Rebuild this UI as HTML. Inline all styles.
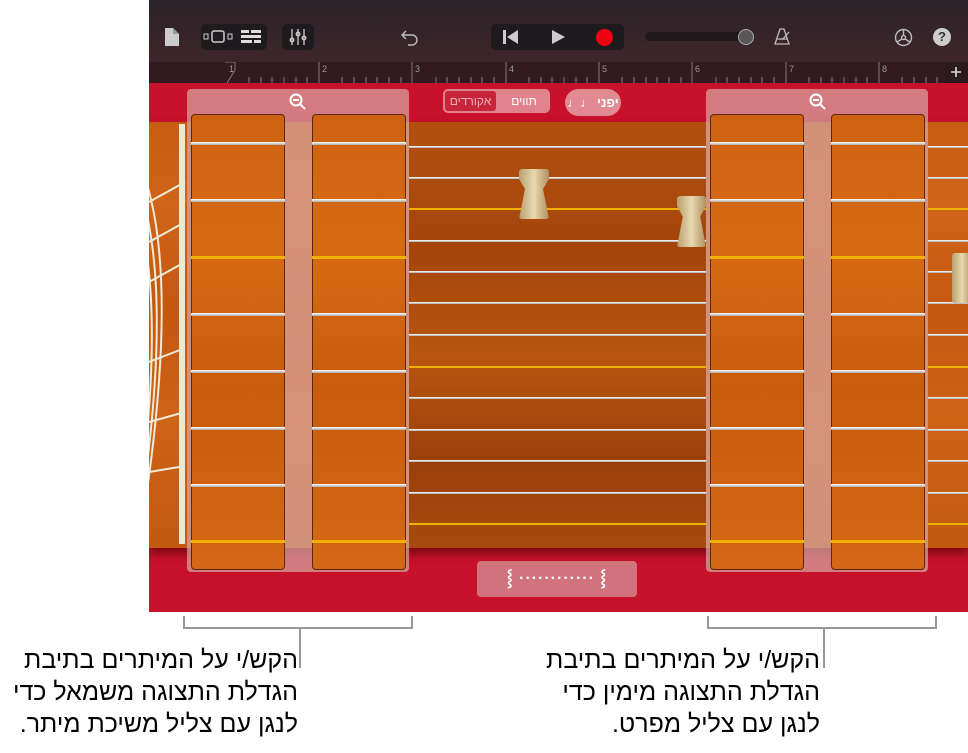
<!DOCTYPE html><html><head><meta charset="utf-8"><style>
*{margin:0;padding:0;box-sizing:border-box}
body{width:968px;height:753px;background:#fff;position:relative;overflow:hidden;font-family:"Liberation Sans","Noto Sans CJK SC",sans-serif}
.a{position:absolute}
#app{left:149px;top:0;width:819px;height:612px;overflow:hidden;background:#c8112a}
.tb{left:0;top:0;width:819px;height:62px;background:linear-gradient(#2a2428,#3e252a)}
.ruler{left:0;top:62px;width:819px;height:21px;background:#321a1f}
.wood{left:0;top:122px;width:819px;height:426px;background:linear-gradient(180deg,#c85c12,#d06418 20%,#c45810 45%,#cf6316 70%,#c25a12);box-shadow:0 6px 8px rgba(60,0,0,.5)}
.mid{background:linear-gradient(180deg,#b4500e,#a5450c 30%,#b85510 55%,#9a400a 80%,#a84a0d)}
.panel{background:rgba(215,165,160,.72);border-radius:4px}
.col{background:linear-gradient(180deg,#cf6210,#d66a14 30%,#c95c0c 60%,#d46814);border:1px solid #5a2a10;border-radius:4px}
.s{height:3px;background:linear-gradient(#fff,#aaa);left:0;right:0}
.g{height:3px;background:#f0b000;left:0;right:0}
.btn{background:#1f1a1d;border-radius:5px}
.cal{font-size:25px;direction:rtl;text-align:right;line-height:32px;color:#000;white-space:nowrap}
</style></head><body>
<div id="app" class="a">
<div class="a tb"></div>
<svg class="a" style="left:16px;top:28px" width="14" height="18"><path d="M0 0h8l6 6v12H0z" fill="#ccc"/><path d="M8 0v6h6" fill="#999"/></svg>
<div class="a btn" style="left:52px;top:24px;width:66px;height:26px"></div>
<svg class="a" style="left:54px;top:30px" width="30" height="14"><rect x="1" y="4" width="4" height="5" fill="none" stroke="#ccc"/><rect x="9" y="1" width="12" height="11" rx="2" fill="none" stroke="#ccc" stroke-width="1.5"/><rect x="25" y="4" width="4" height="5" fill="none" stroke="#ccc"/></svg>
<svg class="a" style="left:92px;top:30px" width="20" height="14"><rect x="0" y="0" width="8" height="3" fill="#ddd"/><rect x="10" y="0" width="10" height="3" fill="#ddd"/><rect x="0" y="5" width="20" height="3" fill="#ddd"/><rect x="0" y="10" width="11" height="3" fill="#ddd"/><rect x="13" y="10" width="7" height="3" fill="#ddd"/></svg>
<div class="a btn" style="left:133px;top:24px;width:32px;height:26px"></div>
<svg class="a" style="left:140px;top:29px" width="18" height="16" stroke="#ccc" stroke-width="1.3" fill="none"><path d="M3 0v16M9 0v16M15 0v16"/><circle cx="3" cy="11" r="1.8"/><circle cx="9" cy="5" r="1.8"/><circle cx="15" cy="9" r="1.8"/></svg>
<svg class="a" style="left:252px;top:30px" width="18" height="16" fill="none" stroke="#bbb" stroke-width="1.4"><path d="M5 1L1 5l4 4M1 5h10a5 5 0 010 10H7"/></svg>
<div class="a btn" style="left:342px;top:24px;width:133px;height:26px"></div>
<svg class="a" style="left:354px;top:30px" width="16" height="14"><rect x="0" y="0" width="3" height="14" fill="#ccc"/><path d="M15 0v14L4 7z" fill="#ccc"/></svg>
<svg class="a" style="left:403px;top:30px" width="14" height="14"><path d="M0 0l13 7L0 14z" fill="#ccc"/></svg>
<div class="a" style="left:447px;top:29px;width:17px;height:17px;border-radius:50%;background:#f00011"></div>
<div class="a" style="left:496px;top:32px;width:100px;height:9px;border-radius:5px;background:#201a1d"></div>
<div class="a" style="left:589px;top:29px;width:16px;height:16px;border-radius:50%;background:#5a5557;border:1.5px solid #aaa"></div>
<svg class="a" style="left:624px;top:28px" width="18" height="18" fill="none" stroke="#bbb" stroke-width="1.3"><path d="M2 16h14L11 1H7zM4 11h10M9 12L16 4"/></svg>
<svg class="a" style="left:745px;top:28px" width="19" height="19" fill="none" stroke="#bbb" stroke-width="1.4"><circle cx="9.5" cy="9.5" r="8"/><circle cx="9.5" cy="9.5" r="2"/><path d="M9.5 7.5V2M8 11l-5 3M11 11l5 3"/></svg>
<div class="a" style="left:784px;top:28px;width:18px;height:18px;border-radius:50%;background:#ccc;color:#333;font-size:13px;font-weight:bold;text-align:center;line-height:18px">?</div>
<div class="a ruler"></div>
<svg class="a" style="left:0;top:62px" width="819" height="21">
<g fill="none" stroke="#8a7477" stroke-width="1">
<path d="M76 0h10v8L78 21"/>
<path d="M170 0v21M263 0v21M357 0v21M450 0v21M543 0v21M637 0v21M730 0v21"/>
<path d="M100 15v6M112 15v6M123 15v6M135 15v6M147 15v6M158 15v6M193 15v6M205 15v6M217 15v6M228 15v6M240 15v6M252 15v6M287 15v6M298 15v6M310 15v6M322 15v6M333 15v6M345 15v6M380 15v6M392 15v6M403 15v6M415 15v6M427 15v6M438 15v6M473 15v6M485 15v6M497 15v6M508 15v6M520 15v6M532 15v6M567 15v6M578 15v6M590 15v6M602 15v6M613 15v6M625 15v6M660 15v6M672 15v6M683 15v6M695 15v6M707 15v6M718 15v6M753 15v6M765 15v6M777 15v6M788 15v6"/></g>
<g fill="#999" font-size="9" font-family="Liberation Sans"><text x="80" y="10">1</text><text x="173" y="10">2</text><text x="266" y="10">3</text><text x="360" y="10">4</text><text x="453" y="10">5</text><text x="546" y="10">6</text><text x="640" y="10">7</text><text x="733" y="10">8</text></g>
<rect x="796" y="0" width="23" height="21" fill="#2a1a1d"/><path d="M802 10h10M807 5v10" stroke="#ddd" stroke-width="1.6"/></svg>
<div class="a wood"></div>
<div class="a wood mid" style="left:260px;width:297px;box-shadow:none"></div>
<div class="a" style="left:260px;top:0;width:297px;height:612px">
<div class="a s" style="top:146px;height:2px"></div><div class="a s" style="top:177px;height:2px"></div><div class="a g" style="top:208px;height:2px"></div><div class="a s" style="top:240px;height:2px"></div><div class="a s" style="top:271px;height:2px"></div><div class="a s" style="top:302px;height:2px"></div><div class="a s" style="top:334px;height:2px"></div><div class="a g" style="top:366px;height:2px"></div><div class="a s" style="top:397px;height:2px"></div><div class="a s" style="top:429px;height:2px"></div><div class="a s" style="top:460px;height:2px"></div><div class="a s" style="top:492px;height:2px"></div><div class="a g" style="top:523px;height:2px"></div>
</div>
<div class="a" style="left:779px;top:0;width:40px;height:612px">
<div class="a s" style="top:146px;height:2px"></div><div class="a s" style="top:177px;height:2px"></div><div class="a g" style="top:208px;height:2px"></div><div class="a s" style="top:240px;height:2px"></div><div class="a s" style="top:271px;height:2px"></div><div class="a s" style="top:302px;height:2px"></div><div class="a s" style="top:334px;height:2px"></div><div class="a g" style="top:366px;height:2px"></div><div class="a s" style="top:397px;height:2px"></div><div class="a s" style="top:429px;height:2px"></div><div class="a s" style="top:460px;height:2px"></div><div class="a s" style="top:492px;height:2px"></div><div class="a g" style="top:523px;height:2px"></div>
</div>
<div class="a" style="left:370px;top:169px;width:30px;height:50px;background:linear-gradient(90deg,#b8a070,#e8d8b0,#b09060);border-radius:3px;clip-path:polygon(0 0,100% 0,100% 20%,80% 40%,100% 100%,0 100%,20% 40%,0 20%)"></div>
<div class="a" style="left:528px;top:196px;width:29px;height:51px;background:linear-gradient(90deg,#b8a070,#e8d8b0,#b09060);border-radius:3px;clip-path:polygon(0 0,100% 0,100% 20%,80% 40%,100% 100%,0 100%,20% 40%,0 20%)"></div>
<div class="a" style="left:803px;top:253px;width:20px;height:50px;background:linear-gradient(90deg,#b8a070,#e8d8b0,#b09060);border-radius:3px"></div>
<svg class="a" style="left:0;top:122px" width="40" height="426" fill="none" stroke="#f0ead8" stroke-width="2"><path d="M-20 20Q40 120 -10 420M-20 40Q30 140 -10 400M-20 60Q20 160 -10 380"/><path d="M0 80l36-20M0 120l36-20M0 160l36-20M0 240l36-14M0 300l36-10M0 350l36-6"/><rect x="30" y="2" width="6" height="420" fill="#efe8d0" stroke="none"/></svg>
<div class="a panel" style="left:38px;top:89px;width:222px;height:483px"></div>
<div class="a panel" style="left:557px;top:89px;width:222px;height:483px"></div>
<svg class="a" style="left:140px;top:93px" width="18" height="18" fill="none" stroke="#fff" stroke-width="2"><circle cx="7" cy="7" r="5.5"/><path d="M4 7h6M11 11l5 5"/></svg>
<svg class="a" style="left:660px;top:93px" width="18" height="18" fill="none" stroke="#fff" stroke-width="2"><circle cx="7" cy="7" r="5.5"/><path d="M4 7h6M11 11l5 5"/></svg>
<div class="a col" style="left:42px;top:114px;width:94px;height:456px"></div>
<div class="a col" style="left:163px;top:114px;width:94px;height:456px"></div>
<div class="a col" style="left:561px;top:114px;width:94px;height:456px"></div>
<div class="a col" style="left:682px;top:114px;width:94px;height:456px"></div>
<div class="a" style="left:42px;top:0;width:788px;height:612px">
<div class="a" style="left:0;width:94px;top:0;height:612px"><div class="a s" style="top:142px"></div><div class="a s" style="top:199px"></div><div class="a g" style="top:256px"></div><div class="a s" style="top:313px"></div><div class="a s" style="top:370px"></div><div class="a s" style="top:427px"></div><div class="a s" style="top:484px"></div><div class="a g" style="top:540px"></div></div>
<div class="a" style="left:121px;width:94px;top:0;height:612px"><div class="a s" style="top:142px"></div><div class="a s" style="top:199px"></div><div class="a g" style="top:256px"></div><div class="a s" style="top:313px"></div><div class="a s" style="top:370px"></div><div class="a s" style="top:427px"></div><div class="a s" style="top:484px"></div><div class="a g" style="top:540px"></div></div>
<div class="a" style="left:519px;width:94px;top:0;height:612px"><div class="a s" style="top:142px"></div><div class="a s" style="top:199px"></div><div class="a g" style="top:256px"></div><div class="a s" style="top:313px"></div><div class="a s" style="top:370px"></div><div class="a s" style="top:427px"></div><div class="a s" style="top:484px"></div><div class="a g" style="top:540px"></div></div>
<div class="a" style="left:640px;width:94px;top:0;height:612px"><div class="a s" style="top:142px"></div><div class="a s" style="top:199px"></div><div class="a g" style="top:256px"></div><div class="a s" style="top:313px"></div><div class="a s" style="top:370px"></div><div class="a s" style="top:427px"></div><div class="a s" style="top:484px"></div><div class="a g" style="top:540px"></div></div>
</div>
<div class="a" style="left:294px;top:89px;width:107px;height:24px;border-radius:5px;background:rgba(230,160,165,.8);overflow:hidden;font-size:12px;color:#fff;direction:rtl">
<div class="a" style="right:0;top:0;width:52px;height:24px;text-align:center;line-height:24px">תווים</div>
<div class="a" style="left:2px;top:2px;width:51px;height:20px;background:#c7263a;border-radius:3px;text-align:center;line-height:20px;color:#f3b0b8">אקורדים</div></div>
<div class="a" style="left:416px;top:89px;width:56px;height:27px;border-radius:14px;background:rgba(230,160,165,.85);color:#fff;font-size:13px;line-height:27px;text-align:center;font-weight:bold">♩♩ יפני</div>
<div class="a" style="left:328px;top:561px;width:160px;height:36px;border-radius:4px;background:rgba(210,140,145,.8);color:#fff;font-size:16px;line-height:36px;text-align:center;font-weight:bold;letter-spacing:1px">⸾ ············ ⸾</div>
</div>
<svg class="a" style="left:0;top:612px" width="968" height="60" fill="none" stroke="#999" stroke-width="2"><path d="M184 4v12h228V4M300 16v40M708 4v12h228V4M824 16v40"/></svg>
<div class="a cal" style="right:670px;top:644px;width:300px">הקש/י על המיתרים בתיבת<br>הגדלת התצוגה משמאל כדי<br>לנגן עם צליל משיכת מיתר.</div>
<div class="a cal" style="right:148px;top:644px;width:300px">הקש/י על המיתרים בתיבת<br>הגדלת התצוגה מימין כדי<br>לנגן עם צליל מפרט.</div>
</body></html>
